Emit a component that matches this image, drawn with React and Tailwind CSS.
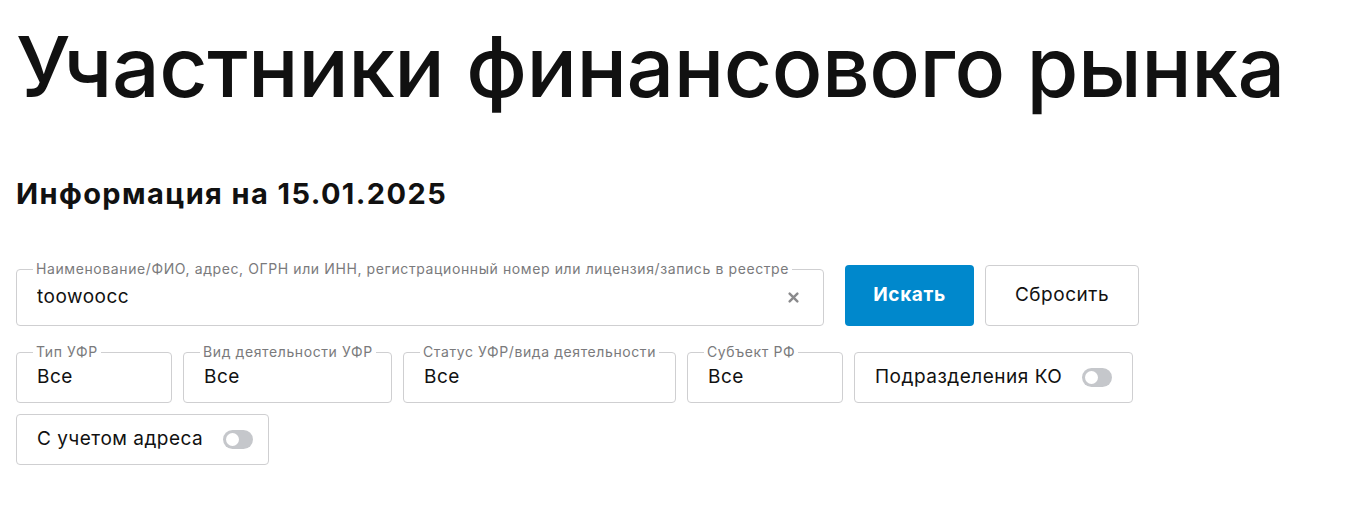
import { useState } from "react";

const FILTERS = [
  { id: "type", label: "Тип УФР", value: "Все", width: "w-[156px]" },
  { id: "activity", label: "Вид деятельности УФР", value: "Все", width: "w-[209px]" },
  { id: "status", label: "Статус УФР/вида деятельности", value: "Все", width: "w-[273px]" },
  { id: "region", label: "Субъект РФ", value: "Все", width: "w-[156px]" },
];

function Toggle({ on, onChange }) {
  return (
    <button
      onClick={() => onChange(!on)}
      className={`relative w-[30px] h-[19px] rounded-full shrink-0 ${on ? "bg-[#0088cc]" : "bg-[#c5c7cb]"}`}
    >
      <span
        className={`absolute top-[3px] w-[13px] h-[13px] rounded-full bg-white ${on ? "left-[14px]" : "left-[3px]"}`}
      />
    </button>
  );
}

function Field({ label, value, width }) {
  return (
    <div className={`relative ${width} h-[51px] border border-[#cfcfd1] rounded-[4px] flex items-center px-5`}>
      <span className="absolute -top-[9px] left-[16px] bg-white px-[3px] text-[14px] leading-[16px] tracking-[0.6px] text-[#7a7a7c] whitespace-nowrap">
        {label}
      </span>
      <span className="text-[19px] tracking-[0.5px] text-[#111]">{value}</span>
    </div>
  );
}

function SwitchBox({ label, on, onChange, width }) {
  return (
    <div className={`${width} h-[51px] border border-[#cfcfd1] rounded-[4px] flex items-center pl-5 gap-5`}>
      <span className="text-[19px] tracking-[0.5px] text-[#111] whitespace-nowrap">{label}</span>
      <Toggle on={on} onChange={onChange} />
    </div>
  );
}

export default function App() {
  const [query, setQuery] = useState("toowoocc");
  const [branches, setBranches] = useState(false);
  const [withAddress, setWithAddress] = useState(false);

  return (
    <div className="bg-white min-h-[509px] px-4 font-['Inter',sans-serif] text-[#111]">
      {/* Header */}
      <h1 className="pt-[15px] text-[84px] leading-[104px] tracking-[-0.5px] font-medium whitespace-nowrap">
        Участники финансового рынка
      </h1>
      <h2 className="mt-[58px] text-[29px] leading-[34px] tracking-[1.4px] font-bold">Информация на 15.01.2025</h2>

      {/* Search row */}
      <div className="mt-[54px] flex items-end">
        <div className="relative w-[808px] h-[57px] border border-[#cfcfd1] rounded-[4px] flex items-center pl-5 pr-6">
          <span className="absolute -top-[9px] left-[16px] bg-white px-[3px] text-[14px] leading-[16px] tracking-[0.6px] text-[#7a7a7c] whitespace-nowrap">
            Наименование/ФИО, адрес, ОГРН или ИНН, регистрационный номер или лицензия/запись в реестре
          </span>
          <input
            value={query}
            onChange={(e) => setQuery(e.target.value)}
            className="flex-1 text-[19px] tracking-[0.5px] text-[#111] outline-none bg-transparent"
          />
          <button onClick={() => setQuery("")} className="ml-3 text-[#8a8a8c]">
            <svg width="11" height="11" viewBox="0 0 10 10">
              <path d="M1.5 1.5l7 7M8.5 1.5l-7 7" stroke="currentColor" strokeWidth="2.2" strokeLinecap="round" />
            </svg>
          </button>
        </div>
        <button className="ml-[21px] w-[129px] h-[61px] rounded-[4px] bg-[#0088cc] text-white text-[19px] tracking-[0.6px] font-bold">
          Искать
        </button>
        <button className="ml-[11px] w-[154px] h-[61px] rounded-[4px] border border-[#cfcfd1] text-[19px] tracking-[0.5px] text-[#111]">
          Сбросить
        </button>
      </div>

      {/* Filters */}
      <div className="mt-[26px] flex flex-wrap gap-[11px] w-[1130px]">
        {FILTERS.map((f) => (
          <Field key={f.id} label={f.label} value={f.value} width={f.width} />
        ))}
        <SwitchBox label="Подразделения КО" on={branches} onChange={setBranches} width="w-[279px]" />
        <SwitchBox label="С учетом адреса" on={withAddress} onChange={setWithAddress} width="w-[253px]" />
      </div>
    </div>
  );
}
